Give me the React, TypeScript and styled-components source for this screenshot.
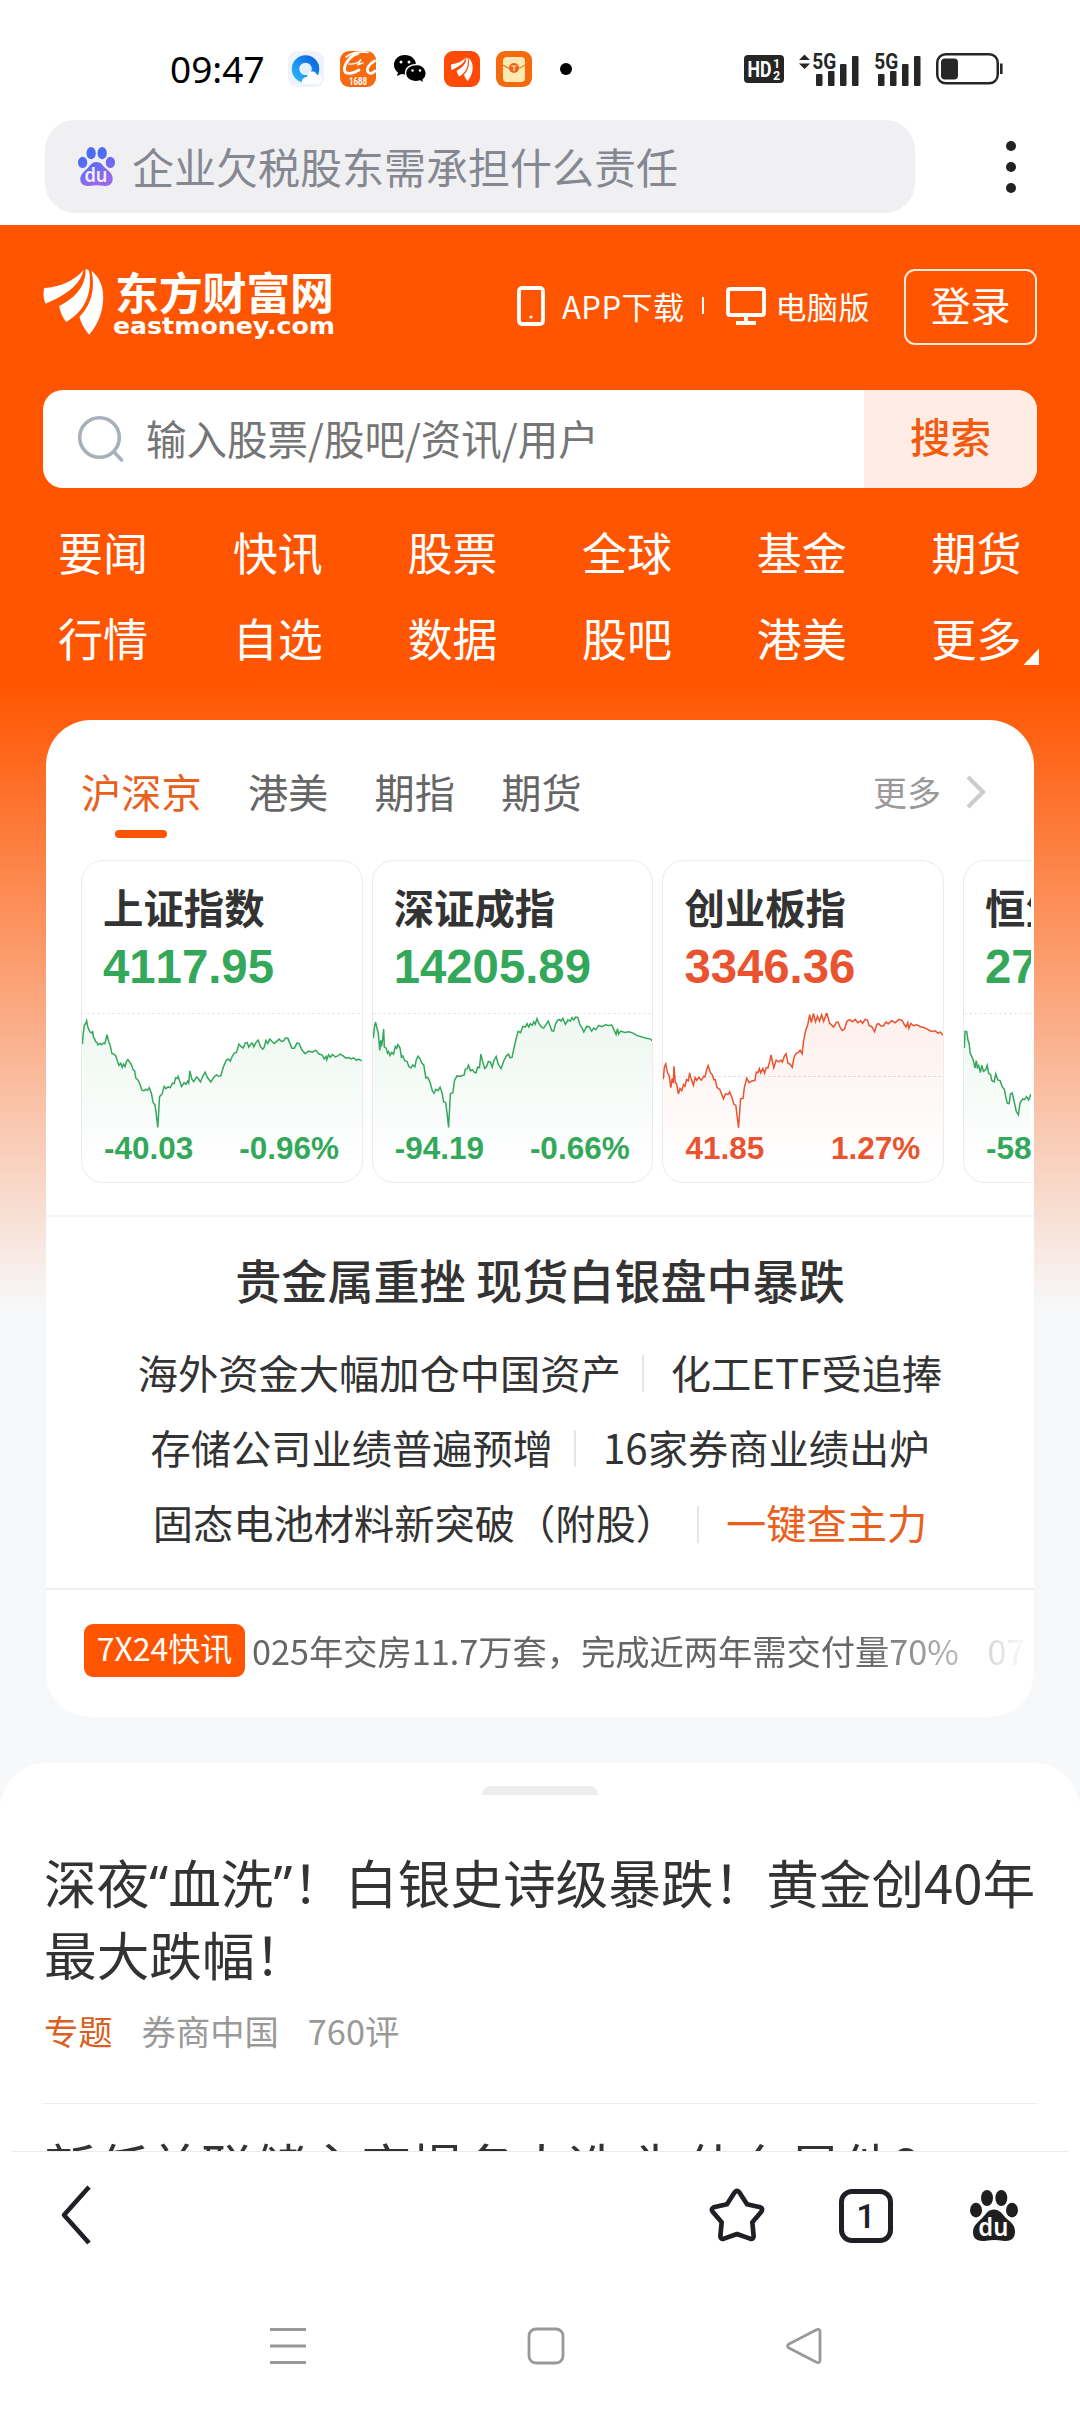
import React from "react";
import styled, { createGlobalStyle } from "styled-components";

const sans = `"Noto Sans CJK SC", "Noto Sans", sans-serif`;
const GREEN = "#34a85a";
const RED = "#e9532f";

const Global = createGlobalStyle`
  * { box-sizing: border-box; }
  body { margin: 0; background: #fff; font-family: ${sans}; color: #333; }
`;

const Screen = styled.div`
  width: 1080px;
  height: 2412px;
  overflow: hidden;
  display: flex;
  flex-direction: column;
  background: #fff;
  white-space: nowrap;
`;

/* ---------- status bar ---------- */
const StatusBar = styled.div`
  height: 120px;
  flex: none;
  padding: 18px 77px 0 170px;
  display: flex;
  align-items: center;
  justify-content: space-between;
`;
const StatusGroup = styled.div<{ $gap: number }>`
  display: flex;
  align-items: center;
  gap: ${(p) => p.$gap}px;
`;
const Clock = styled.span`
  width: 102px;
  font: 400 37px/40px "Noto Sans", sans-serif;
  color: #000;
`;
const Dot = styled.i<{ $size: number; $color: string }>`
  width: ${(p) => p.$size}px;
  height: ${(p) => p.$size}px;
  border-radius: 50%;
  background: ${(p) => p.$color};
`;
const MoreDot = styled(Dot)`
  margin-left: 12px;
`;

/* ---------- address row ---------- */
const AddressRow = styled.div`
  height: 105px;
  flex: none;
  display: flex;
  padding-left: 45px;
`;
const AddressPill = styled.div`
  width: 870px;
  height: 93px;
  border-radius: 30px;
  background: #f0f0f3;
  display: flex;
  align-items: center;
  padding: 0 0 1px 33px;
  gap: 17px;
  font-size: 42px;
  line-height: 60px;
  color: #858891;
`;
const Kebab = styled.div`
  width: 10px;
  height: 93px;
  margin-left: 91px;
  display: flex;
  flex-direction: column;
  align-items: center;
  justify-content: center;
  gap: 11px;
`;

/* ---------- page ---------- */
const Page = styled.main`
  height: 1926px;
  flex: none;
  overflow: hidden;
  background: linear-gradient(#ff5500 0, #ff5500 460px, #f7f8fa 1085px);
`;
const HeaderRow = styled.header`
  height: 165px;
  padding: 0 43px 2px 42px;
  display: flex;
  align-items: center;
  color: #fff;
`;
const HeaderLinks = styled.div`
  margin-left: auto;
  display: flex;
  align-items: center;
  padding-bottom: 2px;
  font-size: 31px;
  line-height: 44px;
`;
const HeaderLink = styled.span<{ $gap: number }>`
  display: flex;
  align-items: center;
  gap: ${(p) => p.$gap}px;
  letter-spacing: 0.5px;
`;
const LinkRule = styled.i`
  width: 2px;
  height: 17px;
  margin: 0 22px 0 17px;
  background: #fff;
`;
const LoginButton = styled.button`
  width: 133px;
  height: 76px;
  margin-left: 34px;
  padding: 0 0 6px;
  border: 2px solid #ffe9d9;
  border-radius: 11px;
  background: none;
  color: #fff;
  font: 400 40px/60px ${sans};
`;
const SearchBox = styled.div`
  height: 98px;
  margin: 0 43px;
  border-radius: 20px;
  overflow: hidden;
  background: #fff;
  display: flex;
  align-items: center;
  padding-left: 34px;
  font-size: 40.5px;
  line-height: 60px;
  color: #757575;
`;
const SearchHint = styled.span`
  margin-left: 21px;
  padding-bottom: 2px;
`;
const SearchButton = styled.button`
  width: 173px;
  height: 98px;
  margin-left: auto;
  padding: 0 0 6px;
  border: 0;
  background: #ffede5;
  color: #f25a10;
  font: 500 40.5px/60px ${sans};
`;
const Nav = styled.nav`
  height: 232px;
  padding: 21px 0 0 58px;
  display: grid;
  grid-template-columns: repeat(6, 174.7px);
  grid-auto-rows: 86px;
  align-content: start;
  color: #fff;
  font-size: 45px;
  line-height: 86px;
`;
const NavItem = styled.a`
  display: flex;
`;
const MoreCorner = styled.i`
  width: 16px;
  height: 17px;
  margin: 53px 0 0 2px;
  background: #fff;
  clip-path: polygon(100% 0, 100% 100%, 0 100%);
`;

/* ---------- market card ---------- */
const Card = styled.section`
  width: 988px;
  height: 997px;
  margin: 0 46px;
  border-radius: 45px;
  background: #fff;
  overflow: hidden;
`;
const Tabs = styled.div`
  height: 140px;
  padding: 40px 48px 0 35px;
  display: flex;
  gap: 46.3px;
  font-size: 40.2px;
  line-height: 62px;
  color: #666;
`;
const Tab = styled.span<{ $active?: boolean }>`
  height: 78px;
  display: flex;
  flex-direction: column;
  align-items: center;
  gap: 8px;
  color: ${(p) => (p.$active ? "#e9601c" : "#666")};
  &::after {
    content: "";
    width: 52px;
    height: 8px;
    flex: none;
    border-radius: 4px;
    background: ${(p) => (p.$active ? "#ff5500" : "transparent")};
  }
`;
const TabMore = styled.span`
  height: 64px;
  margin-left: auto;
  display: flex;
  align-items: center;
  gap: 25px;
  font-size: 34px;
  color: #999;
`;
const Quotes = styled.div`
  width: 950px;
  height: 355px;
  margin-left: 35px;
  overflow: hidden;
  display: flex;
  gap: 9px;
`;
const QuoteCard = styled.article<{ $color: string; $apart?: boolean }>`
  width: 281.7px;
  height: 323px;
  flex: none;
  margin-left: ${(p) => (p.$apart ? 10 : 0)}px;
  border: 1px solid #ebebeb;
  border-radius: 22px;
  overflow: hidden;
  display: grid;
  grid-template-rows: 152px 170px;
  color: ${(p) => p.$color};
  font-family: "Liberation Sans", Arial, sans-serif;
  font-weight: 700;
  font-kerning: none;
`;
const QuoteHead = styled.div`
  padding: 16px 0 0 21px;
`;
const QuoteName = styled.h3`
  margin: 0;
  font: 700 40.4px/60px ${sans};
  color: #333;
`;
const QuoteValue = styled.div`
  padding-top: 2px;
  font-size: 47.3px;
  line-height: 56px;
`;
const ChartArea = styled.div`
  display: grid;
  & > * { grid-area: 1 / 1; }
`;
const QuoteFoot = styled.div`
  align-self: end;
  display: flex;
  justify-content: space-between;
  padding: 0 23px 17px 22px;
  font-size: 31.500px;
  line-height: 36px;
`;

/* ---------- headlines ---------- */
const Headlines = styled.div`
  height: 375px;
  border-top: 2px solid #f4f4f4;
  border-bottom: 2px solid #f0f0f0;
  padding-top: 26px;
  text-align: center;
`;
const LeadLine = styled.h2`
  margin: 0;
  height: 91px;
  font: 500 46.1px/72px ${sans};
`;
const PairLine = styled.div`
  height: 75.3px;
  display: flex;
  justify-content: center;
  align-items: center;
  font-size: 40.25px;
  line-height: 60px;
`;
const PairRule = styled.i`
  width: 2px;
  height: 37px;
  margin: 4px 27px 0 21px;
  background: #e6e6e6;
`;
const Hot = styled.span`
  color: #e9601c;
`;
const Ticker = styled.div`
  display: flex;
  align-items: center;
  margin: 34px 0 0 38px;
  height: 53px;
`;
const TickerBadge = styled.span`
  width: 161px;
  height: 53px;
  flex: none;
  border-radius: 9px;
  background: #ff5500;
  color: #fff;
  font-size: 32px;
  line-height: 47px;
  text-align: center;
`;
const TickerText = styled.span`
  width: 785px;
  padding: 0 0 2px 7px;
  overflow: hidden;
  font-size: 34.25px;
  line-height: 50px;
  color: #666;
  word-spacing: 21px;
  mask-image: linear-gradient(90deg, #000 620px, transparent 785px);
`;

/* ---------- feed ---------- */
const Feed = styled.section`
  height: 400px;
  margin-top: 46px;
  padding: 23px 43px 0;
  border-radius: 46px 46px 0 0;
  background: #fff;
`;
const Handle = styled.div`
  width: 116px;
  height: 9px;
  margin: 0 auto;
  border-radius: 9px 9px 0 0;
  background: #ededed;
`;
const Story = styled.article`
  height: 309px;
  padding-top: 50px;
  border-bottom: 1px solid #ebebeb;
`;
const StoryTitle = styled.h2`
  margin: 0;
  padding-left: 1px;
  font-size: 52.65px;
  line-height: 72px;
  font-weight: 400;
`;
const Quoted = styled.span`
  font-family: "Noto Sans", sans-serif;
  line-height: 0;
`;
const NextTitle = styled(StoryTitle)`
  padding-top: 25px;
  font-size: 52.4px;
`;
const StoryMeta = styled.div`
  margin: 16px 0 0 1px;
  display: flex;
  gap: 29px;
  font-size: 34.3px;
  line-height: 50px;
  color: #999;
`;
const Topic = styled.span`
  color: #d9601e;
`;

/* ---------- bottom bars ---------- */
const Toolbar = styled.footer`
  height: 127px;
  flex: none;
  margin: 0 12px;
  padding: 0 50px 0 48px;
  border-top: 1px solid #ebebeb;
  display: flex;
  align-items: center;
`;
const ToolbarRight = styled.div`
  margin-left: auto;
  display: flex;
  align-items: center;
`;
const TabCount = styled.span`
  width: 54px;
  height: 54px;
  margin: 2px 77px 0 74px;
  border: 5px solid #1f2025;
  border-radius: 13px;
  font: 500 34px/44px Roboto, sans-serif;
  text-align: center;
  color: #1f2025;
`;
const SystemNav = styled.div`
  height: 134px;
  flex: none;
  padding: 2px 257px 0 269px;
  display: flex;
  align-items: center;
  justify-content: space-between;
`;

/* ---------- drawings ---------- */
const Paw = ({ w, h, colors, ink }: { w: number; h: number; colors: [string, string]; ink: string }) => {
  const id = "paw" + w;
  return (
    <svg width={w} height={h} viewBox="0 0 144 152" preserveAspectRatio="none">
      <defs>
        <linearGradient id={id} gradientUnits="userSpaceOnUse" x1="0" y1="0" x2="60" y2="152">
          <stop offset=".3" stopColor={colors[0]} />
          <stop offset="1" stopColor={colors[1]} />
        </linearGradient>
      </defs>
      <g fill={`url(#${id})`}>
        <ellipse cx="18" cy="60" rx="18" ry="22" />
        <ellipse cx="51" cy="24" rx="18" ry="24" />
        <ellipse cx="94" cy="24" rx="18" ry="24" />
        <ellipse cx="126" cy="60" rx="18" ry="22" />
        <path d="M72 58 C88 58 96 70 104 80 C116 92 136 102 135 125 C134 148 118 154 98 151 C80 148 66 148 48 151 C26 154 9 148 9 125 C9 104 28 94 40 80 C49 69 56 58 72 58Z" />
      </g>
      <text x="70" y="138" textAnchor="middle" fontFamily="Noto Sans, sans-serif" fontWeight="600" fontSize="74" fill={ink} textLength="90" lengthAdjust="spacingAndGlyphs">du</text>
    </svg>
  );
};

const feathers = [
  "M2 57 C50 54 92 36 120 3 C112 42 78 74 6 104 C-1 88 -1 72 2 57Z",
  "M126 1 C128 42 104 84 47 111 C50 130 58 146 68 159 C122 128 148 76 137 6 C134 2 130 0 126 1Z",
  "M144 5 C172 26 184 66 178 104 C174 142 156 175 137 197 C121 177 111 160 108 143 C144 106 156 58 144 5Z",
];

const QQBrowserIcon = () => (
  <svg width="36" height="36" viewBox="0 0 36 36">
    <defs>
      <linearGradient id="qq" x1="0" y1="1" x2="1" y2="0">
        <stop offset="0" stopColor="#28b4fa" />
        <stop offset="1" stopColor="#0b66e0" />
      </linearGradient>
    </defs>
    <rect width="36" height="36" rx="9" fill="#eef3fb" />
    <circle cx="17.500" cy="18" r="10" fill="#e6effc" stroke="url(#qq)" strokeWidth="7.500" />
    <path d="M14 33 C13 28 16 26 19 26 C20 19 28 19 29 24 C34 24 35 32 30 33Z" fill="#fff" />
  </svg>
);
const Icon1688 = () => (
  <svg width="36" height="36" viewBox="0 0 36 36">
    <rect width="36" height="36" rx="9" fill="#f76a10" />
    <g fill="none" stroke="#fff" strokeLinecap="round">
      <path d="M6 6 C12 1 22 0 28 1.500" strokeWidth="1.600" />
      <path d="M18 2.500 C10 4 4 14 4.500 19 C5 24 13 23 19 19" strokeWidth="2.800" />
      <path d="M9 13 C14 13.500 19 11.500 21 8.500 L18 13.500 L23 12" strokeWidth="1.400" />
      <path d="M34.500 10 C29 13 26 18 28 21 C30 23.500 33 22 35 20" strokeWidth="2.800" />
    </g>
    <text x="18" y="34" textAnchor="middle" fontFamily="Roboto, sans-serif" fontWeight="700" fontSize="11" textLength="18" lengthAdjust="spacingAndGlyphs" fill="#fff">1688</text>
  </svg>
);
const WeChatIcon = () => (
  <svg width="36" height="36" viewBox="0 0 36 36">
    <path d="M13 4 C6 4 2 8.500 2 14 C2 17 3.500 19.500 6 21.500 L5 25 L9.500 23 C17 25 24 20 24 14 C24 8 19 4 13 4Z" />
    <path d="M24.500 13.500 C18 13.500 13.500 17 13.500 22 C13.500 28 20 32 28 30 L32 32.500 L31 29 C37 24 34 13.500 24.500 13.500Z" stroke="#fff" strokeWidth="1.300" />
    <g fill="#fff"><circle cx="9" cy="11" r="1.500" /><circle cx="17" cy="11" r="1.500" /><circle cx="20.500" cy="19.500" r="1.200" /><circle cx="28" cy="19.500" r="1.200" /></g>
  </svg>
);
const EastIcon = () => (
  <svg width="36" height="36" viewBox="0 0 36 36">
    <rect width="36" height="36" rx="9" fill="#ff4a05" />
    <g transform="translate(7 6.500) scale(.121 .119)" fill="#fff">{feathers.map((d) => <path key={d} d={d} />)}</g>
  </svg>
);
const EnvelopeIcon = () => (
  <svg width="36" height="36" viewBox="0 0 36 36">
    <rect width="36" height="36" rx="9" fill="#f56a0e" />
    <rect x="7" y="6" width="22" height="25" rx="4" fill="#ffe9b0" />
    <path d="M7 14 Q18 22 29 14" fill="none" stroke="#ee7a22" strokeWidth="1.400" />
    <circle cx="18" cy="17" r="5" fill="#e9661c" />
    <path d="M15.500 15 H20.500 M18 15 V20" stroke="#ffe9b0" strokeWidth="1.200" />
  </svg>
);
const HdIcon = () => (
  <svg width="40" height="28" viewBox="0 0 40 28">
    <rect width="40" height="28" rx="4" fill="#262626" />
    <g fill="#fff" fontFamily="Roboto, sans-serif" fontWeight="700">
      <text x="3.500" y="22" fontSize="22" textLength="24" lengthAdjust="spacingAndGlyphs">HD</text>
      <text x="29" y="13" fontSize="12.500">1</text>
      <text x="29" y="25" fontSize="12.500">2</text>
    </g>
  </svg>
);
const Signal = ({ arrows }: { arrows?: boolean }) => {
  const o = arrows ? 14 : 0;
  return (
    <svg width={46 + o} height="33" viewBox={`${-o} 0 ${46 + o} 33`} overflow="visible">
      {arrows && <path d="M-14 7 L-8.500 1.500 L-3 7Z M-14 10.500 H-3 L-8.500 16Z" fill="#262626" />}
      <text x="-.8" y="16" fontFamily="Roboto, sans-serif" fontWeight="700" fontSize="22" textLength="24" lengthAdjust="spacingAndGlyphs" fill="#262626">5G</text>
      <g fill="#262626">
        <rect x="3" y="21" width="6.500" height="12" rx="1" />
        <rect x="15" y="18" width="6.500" height="15" rx="1" />
        <rect x="27" y="11" width="6.500" height="22" rx="1" />
        <rect x="39" y="3" width="6.500" height="30" rx="1" />
      </g>
    </svg>
  );
};
const Battery = () => (
  <svg width="67" height="32" viewBox="0 0 67 32">
    <rect x="1.250" y="1.250" width="60.500" height="29" rx="8.500" fill="none" stroke="#262626" strokeWidth="2.500" />
    <rect x="5" y="5.500" width="17" height="21" rx="4" fill="#262626" />
    <path d="M65.300 10.500 V21" stroke="#262626" strokeWidth="2.600" />
  </svg>
);
const Logo = () => (
  <svg width="296" height="86" viewBox="0 0 296 86">
    <g transform="translate(1.500 5) scale(.3333)" fill="#fff">{feathers.map((d) => <path key={d} d={d} />)}</g>
    <text x="73" y="46" fontFamily="Noto Sans CJK SC, sans-serif" fontWeight="700" fontSize="44" textLength="219" fill="#fff">东方财富网</text>
    <text x="71" y="70" fontFamily="DejaVu Sans, sans-serif" fontWeight="700" fontSize="23.500" textLength="222" lengthAdjust="spacingAndGlyphs" fill="#fff">eastmoney.com</text>
  </svg>
);
const PhoneIcon = () => (
  <svg width="28" height="40" viewBox="0 0 28 40" fill="none" stroke="#fff">
    <rect x="2" y="2" width="24" height="36" rx="3" strokeWidth="3.800" />
    <circle cx="14" cy="31" r="1.600" fill="#fff" stroke="none" />
  </svg>
);
const MonitorIcon = () => (
  <svg width="40" height="38" viewBox="0 0 40 38" fill="none" stroke="#fff" strokeWidth="3.800">
    <rect x="2" y="2" width="36" height="26" rx="2" />
    <path d="M20 28 V36 M10 36 H30" />
  </svg>
);
const Magnifier = () => (
  <svg width="48" height="48" viewBox="0 0 48 48" fill="none" stroke="#a7b0ba" strokeWidth="3.600" strokeLinecap="round">
    <circle cx="22.500" cy="22.500" r="19.800" />
    <path d="M37 37 L44.500 45" />
  </svg>
);
const Chevron = () => (
  <svg width="20" height="34" viewBox="0 0 20 34" fill="none" stroke="#ccc" strokeWidth="4.200">
    <path d="M2 2 L17 17 L2 32" />
  </svg>
);

type Quote = {
  name: string; value: string; diff: string; pct: string; color: string;
  box: string; x: number; base: number; line: string; apart?: boolean;
};

const quotes: Quote[] = [
  {
    name: "上证指数", value: "4117.95", diff: "-40.03", pct: "-0.96%", color: GREEN, box: "228 880 787 508", x: 228, base: 880,
    line: "229,973 231,945 235,915 238,912 241,903 244,920 248,932 252,938 256,940 258,934 260,952 264,958 266,965 270,968 273,975 279,971 283,975 288,970 292,972 296,955 298,945 303,965 306,973 309,985 312,1001 318,1003 323,1008 327,1022 332,1036 337,1030 341,1042 345,1033 349,1040 353,1025 357,1019 362,1027 367,1035 372,1050 376,1053 379,1074 385,1080 390,1090 396,1110 402,1113 407,1108 412,1111 417,1103 423,1120 428,1148 433,1154 437,1185 441,1222 446,1130 453,1122 459,1099 464,1106 470,1101 476,1103 482,1090 487,1091 491,1074 495,1076 498,1069 504,1088 508,1100 515,1088 520,1093 525,1084 528,1089 531,1053 537,1078 542,1085 550,1071 556,1078 561,1086 567,1070 574,1057 580,1072 590,1086 600,1070 607,1065 612,1069 618,1068 625,1042 634,1020 640,1018 645,1024 650,1010 656,1000 662,998 669,973 675,980 681,985 687,970 692,968 697,982 703,972 707,970 711,981 717,968 723,961 730,981 736,988 740,983 745,962 750,971 756,958 763,966 768,971 776,964 782,958 789,965 795,963 800,954 807,956 812,970 818,985 825,985 832,970 838,971 846,990 855,1002 865,994 876,997 885,991 893,1002 903,1006 909,1017 914,1010 916,1020 921,1005 926,1012 932,1004 940,1011 947,1008 954,1003 962,1008 970,1015 978,1013 984,1017 991,1014 999,1021 1006,1018 1014,1023",
  },
  {
    name: "深证成指", value: "14205.89", diff: "-94.19", pct: "-0.66%", color: GREEN, box: "1041 880 789 508", x: 1041, base: 880,
    line: "1042,955 1045,922 1048,907 1052,925 1056,940 1058,965 1060,992 1063,962 1065,980 1068,960 1071,928 1073,982 1078,985 1082,1000 1085,995 1089,1007 1094,998 1099,1003 1104,980 1108,985 1111,974 1117,984 1121,1012 1125,1008 1130,1022 1137,1025 1142,1040 1148,1044 1153,1035 1159,1041 1163,1020 1168,1009 1174,1018 1179,1030 1184,1035 1190,1074 1195,1072 1202,1088 1208,1112 1213,1120 1218,1108 1224,1112 1230,1102 1236,1120 1240,1145 1246,1148 1250,1182 1254,1222 1259,1121 1266,1118 1271,1080 1278,1068 1287,1069 1298,1065 1301,1048 1306,1047 1310,1036 1316,1053 1321,1049 1326,1057 1331,1059 1336,1042 1341,1043 1345,1003 1350,1026 1356,1046 1361,1040 1366,1025 1372,1027 1377,1042 1382,1021 1388,1010 1394,1033 1402,1046 1410,1022 1417,1008 1423,1003 1427,1014 1433,1012 1438,986 1444,958 1450,935 1457,939 1463,920 1470,922 1475,912 1480,922 1484,912 1490,917 1494,906 1498,914 1503,897 1509,912 1516,922 1522,925 1528,915 1535,904 1540,918 1545,933 1550,934 1555,914 1561,902 1566,899 1571,904 1576,896 1583,914 1590,901 1597,904 1602,894 1607,901 1612,892 1618,893 1624,915 1629,922 1635,937 1643,920 1650,921 1657,934 1663,925 1669,930 1677,917 1686,921 1696,915 1705,917 1714,916 1722,935 1726,944 1730,927 1733,943 1739,934 1750,938 1762,936 1774,940 1784,947 1797,951 1809,955 1823,958 1829,965",
  },
  {
    name: "创业板指", value: "3346.36", diff: "41.85", pct: "1.27%", color: RED, box: "356 880 819 508", x: 356, base: 1069,
    line: "357,1078 360,1041 364,1032 369,1058 374,1067 379,1103 383,1075 386,1089 388,1039 392,1087 396,1092 401,1122 406,1105 411,1112 416,1094 420,1099 425,1079 430,1083 434,1059 439,1079 445,1096 450,1073 455,1081 461,1072 468,1081 475,1069 479,1071 484,1048 488,1037 494,1057 500,1065 505,1080 509,1079 514,1103 522,1108 527,1121 533,1137 539,1121 546,1124 551,1116 558,1134 563,1152 569,1156 573,1190 577,1223 583,1136 590,1135 594,1102 601,1075 608,1088 616,1083 625,1081 629,1057 634,1058 638,1046 642,1059 648,1046 653,1060 658,1043 663,1044 668,1025 672,1005 680,1044 687,1021 695,1026 701,1021 705,1027 711,1009 716,1002 722,1031 728,1033 734,1042 739,1013 746,1000 752,998 757,991 763,1002 767,965 773,933 779,917 785,885 790,909 796,881 802,906 808,890 814,904 820,885 826,905 835,879 839,894 843,910 850,917 855,922 863,908 868,907 874,922 880,932 887,928 894,905 902,900 910,906 918,899 926,909 934,903 940,911 947,899 954,901 959,918 967,921 975,936 981,914 987,912 993,919 1001,918 1008,907 1015,912 1025,903 1035,909 1046,899 1055,902 1061,913 1067,922 1072,909 1075,926 1081,911 1089,918 1098,915 1109,921 1119,923 1129,928 1141,935 1152,933 1160,940 1168,937 1174,947",
  },
  {
    name: "恒生指数", value: "27387.11", diff: "-580.98", pct: "-2.08%", color: GREEN, box: "1230 880 819 508", x: 1230, base: 880, apart: true,
    line: "1231,985 1233,935 1238,936 1242,963 1245,971 1248,1000 1253,1011 1258,1024 1262,1045 1266,1022 1269,1043 1273,1037 1278,1058 1282,1036 1287,1054 1293,1050 1298,1036 1302,1060 1308,1065 1311,1081 1318,1086 1323,1062 1329,1080 1336,1083 1342,1101 1348,1108 1353,1134 1357,1150 1362,1151 1366,1122 1371,1119 1377,1146 1383,1174 1389,1184 1394,1148 1402,1137 1407,1139 1413,1130 1419,1140 1425,1124 1500,1100 1700,1060 2049,1070",
  },
];

const Chart = ({ q }: { q: Quote }) => {
  const [x, , w] = q.box.split(" ").map(Number);
  const id = "fill" + q.x;
  return (
    <svg width="280" height="170" viewBox={q.box} preserveAspectRatio="none">
      <defs>
        <linearGradient id={id} gradientUnits="userSpaceOnUse" x1="0" y1="880" x2="0" y2="1340">
          <stop offset="0" stopColor={q.color} stopOpacity=".09" />
          <stop offset=".55" stopColor={q.color} stopOpacity=".04" />
          <stop offset="1" stopColor={q.color} stopOpacity="0" />
        </linearGradient>
      </defs>
      <path d={`M${x} ${q.base + 0.8} h${w}`} stroke="#e2e2e2" strokeWidth="1" strokeDasharray="3 2" vectorEffect="non-scaling-stroke" />
      <polygon points={`${x},1388 ${q.line} ${x + w},1388`} fill={`url(#${id})`} />
      <polyline points={q.line} fill="none" stroke={q.color} strokeWidth="1.500" vectorEffect="non-scaling-stroke" />
    </svg>
  );
};

const navItems = ["要闻", "快讯", "股票", "全球", "基金", "期货", "行情", "自选", "数据", "股吧", "港美", "更多"];
const pairs = [
  ["海外资金大幅加仓中国资产", "化工ETF受追捧"],
  ["存储公司业绩普遍预增", "16家券商业绩出炉"],
  ["固态电池材料新突破（附股）", "一键查主力"],
];

export default function App() {
  return (
    <Screen>
      <Global />
      <StatusBar>
        <StatusGroup $gap={16}>
          <Clock>09:47</Clock>
          <QQBrowserIcon />
          <Icon1688 />
          <WeChatIcon />
          <EastIcon />
          <EnvelopeIcon />
          <MoreDot $size={12} $color="#000" />
        </StatusGroup>
        <StatusGroup $gap={15.5}>
          <HdIcon />
          <Signal arrows />
          <Signal />
          <Battery />
        </StatusGroup>
      </StatusBar>

      <AddressRow>
        <AddressPill>
          <Paw w={37} h={39} colors={["#4a6cf5", "#9a68ee"]} ink="#f0f0f3" />
          <span>企业欠税股东需承担什么责任</span>
        </AddressPill>
        <Kebab>
          <Dot $size={10} $color="#222" />
          <Dot $size={10} $color="#222" />
          <Dot $size={10} $color="#222" />
        </Kebab>
      </AddressRow>

      <Page>
        <HeaderRow>
          <Logo />
          <HeaderLinks>
            <HeaderLink $gap={17}><PhoneIcon />APP下载</HeaderLink>
            <LinkRule />
            <HeaderLink $gap={10}><MonitorIcon />电脑版</HeaderLink>
          </HeaderLinks>
          <LoginButton>登录</LoginButton>
        </HeaderRow>
        <SearchBox>
          <Magnifier />
          <SearchHint>输入股票/股吧/资讯/用户</SearchHint>
          <SearchButton>搜索</SearchButton>
        </SearchBox>
        <Nav>
          {navItems.map((item) => (
            <NavItem key={item}>{item}{item === "更多" && <MoreCorner />}</NavItem>
          ))}
        </Nav>

        <Card>
          <Tabs>
            <Tab $active>沪深京</Tab>
            <Tab>港美</Tab>
            <Tab>期指</Tab>
            <Tab>期货</Tab>
            <TabMore>更多<Chevron /></TabMore>
          </Tabs>
          <Quotes>
            {quotes.map((q) => (
              <QuoteCard key={q.name} $color={q.color} $apart={q.apart}>
                <QuoteHead>
                  <QuoteName>{q.name}</QuoteName>
                  <QuoteValue>{q.value}</QuoteValue>
                </QuoteHead>
                <ChartArea>
                  <Chart q={q} />
                  <QuoteFoot><span>{q.diff}</span><span>{q.pct}</span></QuoteFoot>
                </ChartArea>
              </QuoteCard>
            ))}
          </Quotes>
          <Headlines>
            <LeadLine>贵金属重挫 现货白银盘中暴跌</LeadLine>
            {pairs.map(([a, b], i) => (
              <PairLine key={a}>
                <span>{a}</span>
                <PairRule />
                {i === 2 ? <Hot>{b}</Hot> : <span>{b}</span>}
              </PairLine>
            ))}
          </Headlines>
          <Ticker>
            <TickerBadge>7X24快讯</TickerBadge>
            <TickerText>025年交房11.7万套，完成近两年需交付量70% 07:</TickerText>
          </Ticker>
        </Card>

        <Feed>
          <Handle />
          <Story>
            <StoryTitle>
              深夜<Quoted>“</Quoted>血洗<Quoted>”</Quoted>！白银史诗级暴跌！黄金创40年
              <br />
              最大跌幅！
            </StoryTitle>
            <StoryMeta>
              <Topic>专题</Topic>
              <span>券商中国</span>
              <span>760评</span>
            </StoryMeta>
          </Story>
          <NextTitle>新任美联储主席提名人选 为什么是他?</NextTitle>
        </Feed>
      </Page>

      <Toolbar>
        <svg width="32" height="60" viewBox="0 0 32 60" fill="none" stroke="#1f2025" strokeWidth="4.600" strokeLinejoin="round">
          <path d="M29 2 L4 30 L29 58" />
        </svg>
        <ToolbarRight>
          <svg width="56" height="54" viewBox="0 0 168 162" fill="none" stroke="#1f2025" strokeWidth="14" strokeLinejoin="round">
            <path d="M77 13 Q84 4 91 13 L114 49 L154 58 Q163 62 157 71 L130 103 L134 145 Q133 155 123 152 L84 138 L45 152 Q35 155 34 145 L38 103 L11 71 Q5 62 14 58 L54 49 Z" />
          </svg>
          <TabCount>1</TabCount>
          <Paw w={48} h={51} colors={["#1f1f20", "#1f1f20"]} ink="#fff" />
        </ToolbarRight>
      </Toolbar>
      <SystemNav>
        <svg width="38" height="38" viewBox="0 0 38 38" stroke="#999" strokeWidth="2.800">
          <path d="M1 2.500 H37 M1 19 H37 M1 35.500 H37" />
        </svg>
        <svg width="38" height="38" viewBox="0 0 38 38" fill="none" stroke="#999" strokeWidth="2.800">
          <rect x="2" y="2" width="34" height="34" rx="7" />
        </svg>
        <svg width="38" height="38" viewBox="0 0 38 38" fill="none" stroke="#999" strokeWidth="2.800" strokeLinejoin="round">
          <path d="M31 3 Q35 1 35 5 V33 Q35 37 31 35 L4 21 Q1 19 4 17Z" />
        </svg>
      </SystemNav>
    </Screen>
  );
}
